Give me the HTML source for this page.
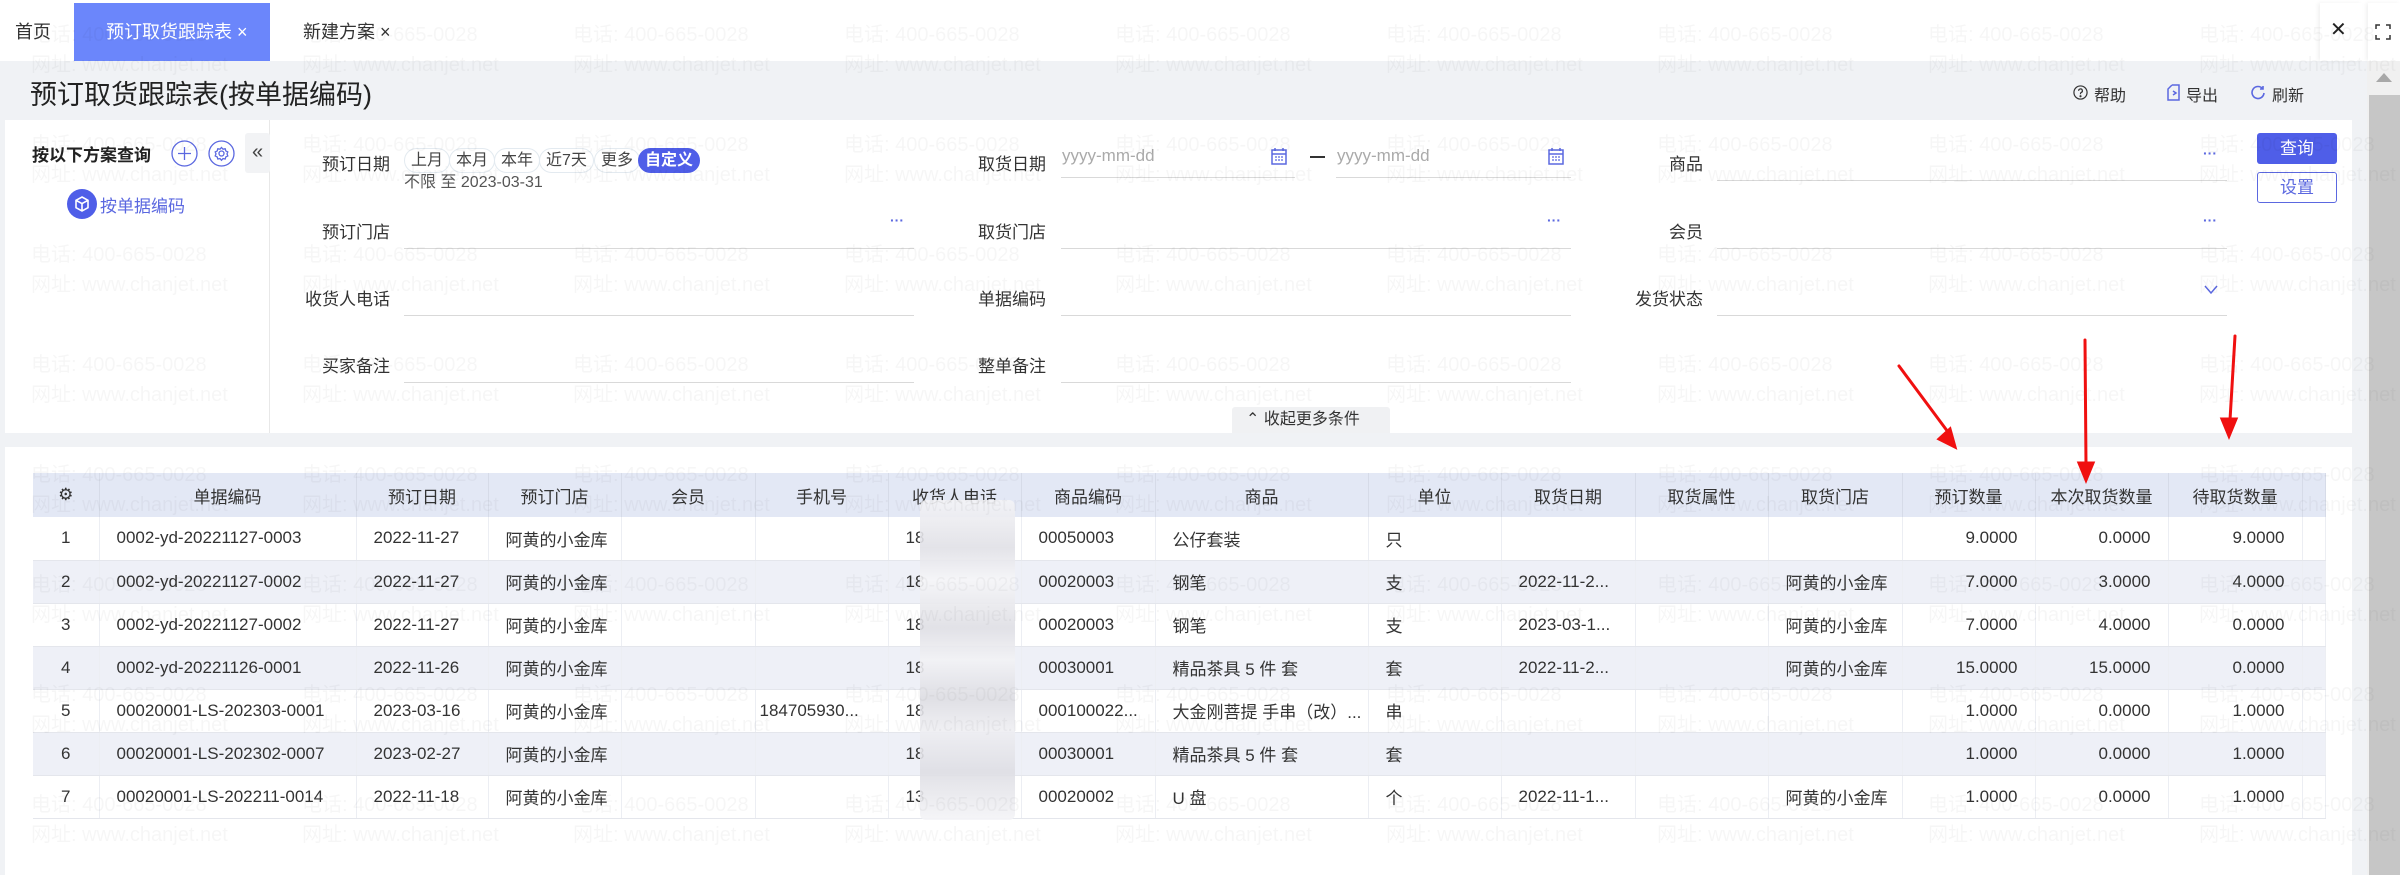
<!DOCTYPE html>
<html><head><meta charset="utf-8">
<style>
*{margin:0;padding:0;box-sizing:border-box}
body{width:2400px;height:875px;overflow:hidden;background:#f0f2f5;font-family:"Liberation Sans","Noto Sans CJK SC",sans-serif;color:#333;position:relative}
.a{position:absolute;white-space:nowrap}
.tabbar{left:0;top:0;width:2400px;height:61px;background:#fff}
.lbl{font-size:17px;color:#333;text-align:right;width:120px}
.ul{height:1px;background:#d9d9d9}
.dots{color:#5b68e0;font-size:14px;font-weight:bold;letter-spacing:0}
.chip{top:148px;height:25px;border:1px solid #e3eaf0;border-radius:13px;font-size:16px;line-height:23px;padding:0 6px;color:#444}
table{position:absolute;left:33px;top:473px;width:2292px;border-collapse:collapse;table-layout:fixed;font-size:17px}
th{height:44px;background:#e3e8f5;font-weight:normal;border-right:1px solid #d6dbe8;text-align:center;color:#333;padding:0}
td{height:43px;border-right:1px solid #eceef3;border-bottom:1px solid #e4e6ec;padding:0 17px;white-space:nowrap;overflow:hidden;color:#333}
tr.s td{background:#eef0f7}
td.c{text-align:center;padding:0}
td.r{text-align:right}
.wm{position:absolute;left:0;top:0;width:2400px;height:875px;pointer-events:none;z-index:10;font-size:20px;color:rgba(0,0,0,0.035)}
.wm div{position:absolute;white-space:nowrap}
.wm span{display:inline-block;width:271px}
</style></head><body>

<div class="a tabbar"></div>
<div class="a" style="left:15px;top:18px;font-size:18px">首页</div>
<div class="a" style="left:74px;top:3px;width:196px;height:58px;background:#6b86fb;color:#fff;font-size:18px;line-height:58px;padding-left:32px">预订取货跟踪表 ×</div>
<div class="a" style="left:303px;top:18px;font-size:18px">新建方案 ×</div>
<div class="a" style="left:2320px;top:3px;width:42px;height:58px;background:#fff;box-shadow:-2px 0 4px rgba(0,0,0,0.06)"></div>
<div class="a" style="left:2330px;top:17px;font-size:20px;color:#222">✕</div>
<div class="a" style="left:2368px;top:3px;width:32px;height:58px;background:#fff;box-shadow:-2px 0 4px rgba(0,0,0,0.06)"></div>
<svg class="a" style="left:2375px;top:24px" width="16" height="16" viewBox="0 0 16 16" fill="none" stroke="#333" stroke-width="1.5"><path d="M1 5V1h4M11 1h4v4M15 11v4h-4M5 15H1v-4"/></svg>

<div class="a" style="left:30px;top:73px;font-size:27px;color:#222">预订取货跟踪表(按单据编码)</div>

<svg class="a" style="left:2073px;top:85px" width="15" height="15" viewBox="0 0 16 16" fill="none" stroke="#333" stroke-width="1.3"><circle cx="8" cy="8" r="7"/><path d="M6 6.2a2 2 0 1 1 2.6 1.9c-.5.2-.6.6-.6 1.1v.6"/><circle cx="8" cy="12" r=".5" fill="#333"/></svg>
<div class="a" style="left:2094px;top:82px;font-size:16px">帮助</div>
<svg class="a" style="left:2167px;top:84px" width="14" height="17" viewBox="0 0 14 17" fill="none" stroke="#5b68e0" stroke-width="1.5"><path d="M5 1h7v15H5M5 1L1 5v11h4"/><path d="M6 11l3-2-3-2"/></svg>
<div class="a" style="left:2186px;top:82px;font-size:16px">导出</div>
<svg class="a" style="left:2251px;top:85px" width="14" height="15" viewBox="0 0 14 15" fill="none" stroke="#5b68e0" stroke-width="1.6"><path d="M11.5 3.5A6 6 0 1 0 13 8"/><path d="M12 1v3H9"/></svg>
<div class="a" style="left:2272px;top:82px;font-size:16px">刷新</div>

<div class="a" style="left:2367px;top:61px;width:33px;height:814px;background:#f0f0f0"></div>
<div class="a" style="left:2376px;top:73px;width:0;height:0;border-left:8px solid transparent;border-right:8px solid transparent;border-bottom:9px solid #a8a8a8"></div>
<div class="a" style="left:2369px;top:95px;width:31px;height:780px;background:#c6c6c6"></div>

<div class="a" style="left:5px;top:120px;width:2347px;height:313px;background:#fff"></div>
<div class="a" style="left:269px;top:120px;width:1px;height:313px;background:#e8e8e8"></div>
<div class="a" style="left:32px;top:141px;font-size:17px;font-weight:bold;color:#222">按以下方案查询</div>
<svg class="a" style="left:171px;top:140px" width="27" height="27" viewBox="0 0 27 27" fill="none" stroke="#5b68e0" stroke-width="1.3"><circle cx="13.5" cy="13.5" r="12.5"/><path d="M13.5 7v13M7 13.5h13"/></svg>
<svg class="a" style="left:208px;top:140px" width="27" height="27" viewBox="0 0 27 27" fill="none" stroke="#5b68e0" stroke-width="1.3"><circle cx="13.5" cy="13.5" r="12.5"/><path d="M13.5 7.5l1.5 1.7 2.2-.4.6 2.1 2 1-.8 2 .8 2-2 1-.6 2.1-2.2-.4-1.5 1.7-1.5-1.7-2.2.4-.6-2.1-2-1 .8-2-.8-2 2-1 .6-2.1 2.2.4z"/><circle cx="13.5" cy="13.5" r="2.5"/></svg>
<div class="a" style="left:245px;top:133px;width:25px;height:40px;background:#f2f3f5;border-radius:3px;font-size:20px;line-height:38px;text-align:center;color:#444">«</div>
<div class="a" style="left:67px;top:189px;width:30px;height:30px;border-radius:15px;background:#4f5ee8"></div>
<svg class="a" style="left:73px;top:195px" width="18" height="18" viewBox="0 0 18 18" fill="none" stroke="#fff" stroke-width="1.6"><path d="M9 2l6 3.3v7.4L9 16l-6-3.3V5.3z M3 5.3L9 8.6l6-3.3M9 8.6V16"/></svg>
<div class="a" style="left:100px;top:192px;font-size:17px;color:#5b68e0">按单据编码</div>

<div class="a lbl" style="left:270px;top:150px">预订日期</div>
<div class="a lbl" style="left:270px;top:218px">预订门店</div>
<div class="a lbl" style="left:270px;top:285px">收货人电话</div>
<div class="a lbl" style="left:270px;top:352px">买家备注</div>
<div class="a lbl" style="left:926px;top:150px">取货日期</div>
<div class="a lbl" style="left:926px;top:218px">取货门店</div>
<div class="a lbl" style="left:926px;top:285px">单据编码</div>
<div class="a lbl" style="left:926px;top:352px">整单备注</div>
<div class="a lbl" style="left:1583px;top:150px">商品</div>
<div class="a lbl" style="left:1583px;top:218px">会员</div>
<div class="a lbl" style="left:1583px;top:285px">发货状态</div>

<div class="a chip" style="left:404px">上月</div>
<div class="a chip" style="left:449px">本月</div>
<div class="a chip" style="left:494px">本年</div>
<div class="a chip" style="left:539px">近7天</div>
<div class="a chip" style="left:594px">更多</div>
<div class="a chip" style="left:638px;background:#4f5ee8;border-color:#4f5ee8;color:#fff;font-weight:bold">自定义</div>
<div class="a" style="left:404px;top:168px;font-size:16px;color:#555">不限 至 2023-03-31</div>

<div class="a" style="left:1062px;top:146px;font-size:17px;color:#aaa">yyyy-mm-dd</div>
<div class="a ul" style="left:1061px;top:177px;width:234px"></div>
<svg class="a" style="left:1271px;top:147px" width="16" height="18" viewBox="0 0 16 18" fill="none" stroke="#5b68e0" stroke-width="1.5"><rect x="1" y="3" width="14" height="14"/><path d="M4 1v3M12 1v3M1 7h14"/><path d="M4 10h2M7 10h2M10 10h2M4 13h2M7 13h2M10 13h2" stroke-width="1.2"/></svg>
<div class="a" style="left:1310px;top:156px;width:15px;height:1.5px;background:#333"></div>
<div class="a" style="left:1337px;top:146px;font-size:17px;color:#aaa">yyyy-mm-dd</div>
<div class="a ul" style="left:1336px;top:177px;width:235px"></div>
<svg class="a" style="left:1548px;top:147px" width="16" height="18" viewBox="0 0 16 18" fill="none" stroke="#5b68e0" stroke-width="1.5"><rect x="1" y="3" width="14" height="14"/><path d="M4 1v3M12 1v3M1 7h14"/><path d="M4 10h2M7 10h2M10 10h2M4 13h2M7 13h2M10 13h2" stroke-width="1.2"/></svg>

<div class="a ul" style="left:1717px;top:180px;width:510px"></div>
<div class="a dots" style="left:2203px;top:145px">···</div>
<div class="a ul" style="left:404px;top:248px;width:510px"></div>
<div class="a dots" style="left:890px;top:212px">···</div>
<div class="a ul" style="left:1061px;top:248px;width:510px"></div>
<div class="a dots" style="left:1547px;top:212px">···</div>
<div class="a ul" style="left:1717px;top:248px;width:510px"></div>
<div class="a dots" style="left:2203px;top:212px">···</div>
<div class="a ul" style="left:404px;top:315px;width:510px"></div>
<div class="a ul" style="left:1061px;top:315px;width:510px"></div>
<div class="a ul" style="left:1717px;top:315px;width:510px"></div>
<svg class="a" style="left:2204px;top:285px" width="14" height="10" viewBox="0 0 14 10" fill="none" stroke="#5b68e0" stroke-width="1.5"><path d="M1 1l6 7 6-7"/></svg>
<div class="a ul" style="left:404px;top:382px;width:510px"></div>
<div class="a ul" style="left:1061px;top:382px;width:510px"></div>

<div class="a" style="left:2257px;top:133px;width:80px;height:31px;background:#4f5ee8;border-radius:3px;color:#fff;font-size:17px;line-height:31px;text-align:center">查询</div>
<div class="a" style="left:2257px;top:172px;width:80px;height:31px;border:1px solid #5b68e0;border-radius:3px;color:#5b68e0;font-size:17px;line-height:29px;text-align:center">设置</div>

<div class="a" style="left:1232px;top:407px;width:158px;height:26px;background:#f0f1f3;border-radius:3px 3px 0 0;font-size:16px;line-height:26px;padding-left:14px;color:#333">⌃ 收起更多条件</div>

<div class="a" style="left:5px;top:447px;width:2347px;height:428px;background:#fff"></div>
<table>
<colgroup><col style="width:66px"><col style="width:257px"><col style="width:132px"><col style="width:133px"><col style="width:134px"><col style="width:133px"><col style="width:133px"><col style="width:134px"><col style="width:213px"><col style="width:133px"><col style="width:134px"><col style="width:133px"><col style="width:134px"><col style="width:133px"><col style="width:133px"><col style="width:134px"><col style="width:23px"></colgroup>
<tr><th>⚙</th><th>单据编码</th><th>预订日期</th><th>预订门店</th><th>会员</th><th>手机号</th><th>收货人电话</th><th>商品编码</th><th>商品</th><th>单位</th><th>取货日期</th><th>取货属性</th><th>取货门店</th><th>预订数量</th><th>本次取货数量</th><th>待取货数量</th><th></th></tr>
<tr><td class="c">1</td><td>0002-yd-20221127-0003</td><td>2022-11-27</td><td>阿黄的小金库</td><td></td><td></td><td>18</td><td>00050003</td><td>公仔套装</td><td>只</td><td></td><td></td><td></td><td class="r">9.0000</td><td class="r">0.0000</td><td class="r">9.0000</td><td></td></tr>
<tr class="s"><td class="c">2</td><td>0002-yd-20221127-0002</td><td>2022-11-27</td><td>阿黄的小金库</td><td></td><td></td><td>18</td><td>00020003</td><td>钢笔</td><td>支</td><td>2022-11-2...</td><td></td><td>阿黄的小金库</td><td class="r">7.0000</td><td class="r">3.0000</td><td class="r">4.0000</td><td></td></tr>
<tr><td class="c">3</td><td>0002-yd-20221127-0002</td><td>2022-11-27</td><td>阿黄的小金库</td><td></td><td></td><td>18</td><td>00020003</td><td>钢笔</td><td>支</td><td>2023-03-1...</td><td></td><td>阿黄的小金库</td><td class="r">7.0000</td><td class="r">4.0000</td><td class="r">0.0000</td><td></td></tr>
<tr class="s"><td class="c">4</td><td>0002-yd-20221126-0001</td><td>2022-11-26</td><td>阿黄的小金库</td><td></td><td></td><td>18</td><td>00030001</td><td>精品茶具 5 件 套</td><td>套</td><td>2022-11-2...</td><td></td><td>阿黄的小金库</td><td class="r">15.0000</td><td class="r">15.0000</td><td class="r">0.0000</td><td></td></tr>
<tr><td class="c">5</td><td>00020001-LS-202303-0001</td><td>2023-03-16</td><td>阿黄的小金库</td><td></td><td style="padding:0 4px">184705930...</td><td>18</td><td>000100022...</td><td>大金刚菩提 手串（改）...</td><td>串</td><td></td><td></td><td></td><td class="r">1.0000</td><td class="r">0.0000</td><td class="r">1.0000</td><td></td></tr>
<tr class="s"><td class="c">6</td><td>00020001-LS-202302-0007</td><td>2023-02-27</td><td>阿黄的小金库</td><td></td><td></td><td>18</td><td>00030001</td><td>精品茶具 5 件 套</td><td>套</td><td></td><td></td><td></td><td class="r">1.0000</td><td class="r">0.0000</td><td class="r">1.0000</td><td></td></tr>
<tr><td class="c">7</td><td>00020001-LS-202211-0014</td><td>2022-11-18</td><td>阿黄的小金库</td><td></td><td></td><td>13</td><td>00020002</td><td>U 盘</td><td>个</td><td>2022-11-1...</td><td></td><td>阿黄的小金库</td><td class="r">1.0000</td><td class="r">0.0000</td><td class="r">1.0000</td><td></td></tr>
</table>

<div class="a" style="left:920px;top:500px;width:95px;height:320px;background:linear-gradient(180deg,#f4f4f7 0%,#e0e0e6 15%,#f6f6f8 25%,#dedee4 40%,#f2f2f5 50%,#dcdce2 62%,#eeeef2 72%,#dedee4 85%,#f4f4f7 100%);border-radius:6px;opacity:.9"></div>

<svg class="a" style="left:0;top:0;z-index:11" width="2400" height="875" viewBox="0 0 2400 875">
<g fill="#f01010" stroke="#f01010" stroke-width="3" stroke-linecap="round">
<path d="M1899 366L1948 432"/><path d="M1955 447l-16-8 11-10z"/>
<path d="M2085 340L2086 465"/><path d="M2086 480l-7-17h14z"/>
<path d="M2235 336L2230 420"/><path d="M2229 436l-7-17h14z"/>
</g></svg>

<div class="wm">
<div style="left:31px;top:18px"><span>电话: 400-665-0028</span><span>电话: 400-665-0028</span><span>电话: 400-665-0028</span><span>电话: 400-665-0028</span><span>电话: 400-665-0028</span><span>电话: 400-665-0028</span><span>电话: 400-665-0028</span><span>电话: 400-665-0028</span><span>电话: 400-665-0028</span></div>
<div style="left:31px;top:48px"><span>网址: www.chanjet.net</span><span>网址: www.chanjet.net</span><span>网址: www.chanjet.net</span><span>网址: www.chanjet.net</span><span>网址: www.chanjet.net</span><span>网址: www.chanjet.net</span><span>网址: www.chanjet.net</span><span>网址: www.chanjet.net</span><span>网址: www.chanjet.net</span></div>
<div style="left:31px;top:128px"><span>电话: 400-665-0028</span><span>电话: 400-665-0028</span><span>电话: 400-665-0028</span><span>电话: 400-665-0028</span><span>电话: 400-665-0028</span><span>电话: 400-665-0028</span><span>电话: 400-665-0028</span><span>电话: 400-665-0028</span><span>电话: 400-665-0028</span></div>
<div style="left:31px;top:158px"><span>网址: www.chanjet.net</span><span>网址: www.chanjet.net</span><span>网址: www.chanjet.net</span><span>网址: www.chanjet.net</span><span>网址: www.chanjet.net</span><span>网址: www.chanjet.net</span><span>网址: www.chanjet.net</span><span>网址: www.chanjet.net</span><span>网址: www.chanjet.net</span></div>
<div style="left:31px;top:238px"><span>电话: 400-665-0028</span><span>电话: 400-665-0028</span><span>电话: 400-665-0028</span><span>电话: 400-665-0028</span><span>电话: 400-665-0028</span><span>电话: 400-665-0028</span><span>电话: 400-665-0028</span><span>电话: 400-665-0028</span><span>电话: 400-665-0028</span></div>
<div style="left:31px;top:268px"><span>网址: www.chanjet.net</span><span>网址: www.chanjet.net</span><span>网址: www.chanjet.net</span><span>网址: www.chanjet.net</span><span>网址: www.chanjet.net</span><span>网址: www.chanjet.net</span><span>网址: www.chanjet.net</span><span>网址: www.chanjet.net</span><span>网址: www.chanjet.net</span></div>
<div style="left:31px;top:348px"><span>电话: 400-665-0028</span><span>电话: 400-665-0028</span><span>电话: 400-665-0028</span><span>电话: 400-665-0028</span><span>电话: 400-665-0028</span><span>电话: 400-665-0028</span><span>电话: 400-665-0028</span><span>电话: 400-665-0028</span><span>电话: 400-665-0028</span></div>
<div style="left:31px;top:378px"><span>网址: www.chanjet.net</span><span>网址: www.chanjet.net</span><span>网址: www.chanjet.net</span><span>网址: www.chanjet.net</span><span>网址: www.chanjet.net</span><span>网址: www.chanjet.net</span><span>网址: www.chanjet.net</span><span>网址: www.chanjet.net</span><span>网址: www.chanjet.net</span></div>
<div style="left:31px;top:458px"><span>电话: 400-665-0028</span><span>电话: 400-665-0028</span><span>电话: 400-665-0028</span><span>电话: 400-665-0028</span><span>电话: 400-665-0028</span><span>电话: 400-665-0028</span><span>电话: 400-665-0028</span><span>电话: 400-665-0028</span><span>电话: 400-665-0028</span></div>
<div style="left:31px;top:488px"><span>网址: www.chanjet.net</span><span>网址: www.chanjet.net</span><span>网址: www.chanjet.net</span><span>网址: www.chanjet.net</span><span>网址: www.chanjet.net</span><span>网址: www.chanjet.net</span><span>网址: www.chanjet.net</span><span>网址: www.chanjet.net</span><span>网址: www.chanjet.net</span></div>
<div style="left:31px;top:568px"><span>电话: 400-665-0028</span><span>电话: 400-665-0028</span><span>电话: 400-665-0028</span><span>电话: 400-665-0028</span><span>电话: 400-665-0028</span><span>电话: 400-665-0028</span><span>电话: 400-665-0028</span><span>电话: 400-665-0028</span><span>电话: 400-665-0028</span></div>
<div style="left:31px;top:598px"><span>网址: www.chanjet.net</span><span>网址: www.chanjet.net</span><span>网址: www.chanjet.net</span><span>网址: www.chanjet.net</span><span>网址: www.chanjet.net</span><span>网址: www.chanjet.net</span><span>网址: www.chanjet.net</span><span>网址: www.chanjet.net</span><span>网址: www.chanjet.net</span></div>
<div style="left:31px;top:678px"><span>电话: 400-665-0028</span><span>电话: 400-665-0028</span><span>电话: 400-665-0028</span><span>电话: 400-665-0028</span><span>电话: 400-665-0028</span><span>电话: 400-665-0028</span><span>电话: 400-665-0028</span><span>电话: 400-665-0028</span><span>电话: 400-665-0028</span></div>
<div style="left:31px;top:708px"><span>网址: www.chanjet.net</span><span>网址: www.chanjet.net</span><span>网址: www.chanjet.net</span><span>网址: www.chanjet.net</span><span>网址: www.chanjet.net</span><span>网址: www.chanjet.net</span><span>网址: www.chanjet.net</span><span>网址: www.chanjet.net</span><span>网址: www.chanjet.net</span></div>
<div style="left:31px;top:788px"><span>电话: 400-665-0028</span><span>电话: 400-665-0028</span><span>电话: 400-665-0028</span><span>电话: 400-665-0028</span><span>电话: 400-665-0028</span><span>电话: 400-665-0028</span><span>电话: 400-665-0028</span><span>电话: 400-665-0028</span><span>电话: 400-665-0028</span></div>
<div style="left:31px;top:818px"><span>网址: www.chanjet.net</span><span>网址: www.chanjet.net</span><span>网址: www.chanjet.net</span><span>网址: www.chanjet.net</span><span>网址: www.chanjet.net</span><span>网址: www.chanjet.net</span><span>网址: www.chanjet.net</span><span>网址: www.chanjet.net</span><span>网址: www.chanjet.net</span></div>
</div>
</body></html>
